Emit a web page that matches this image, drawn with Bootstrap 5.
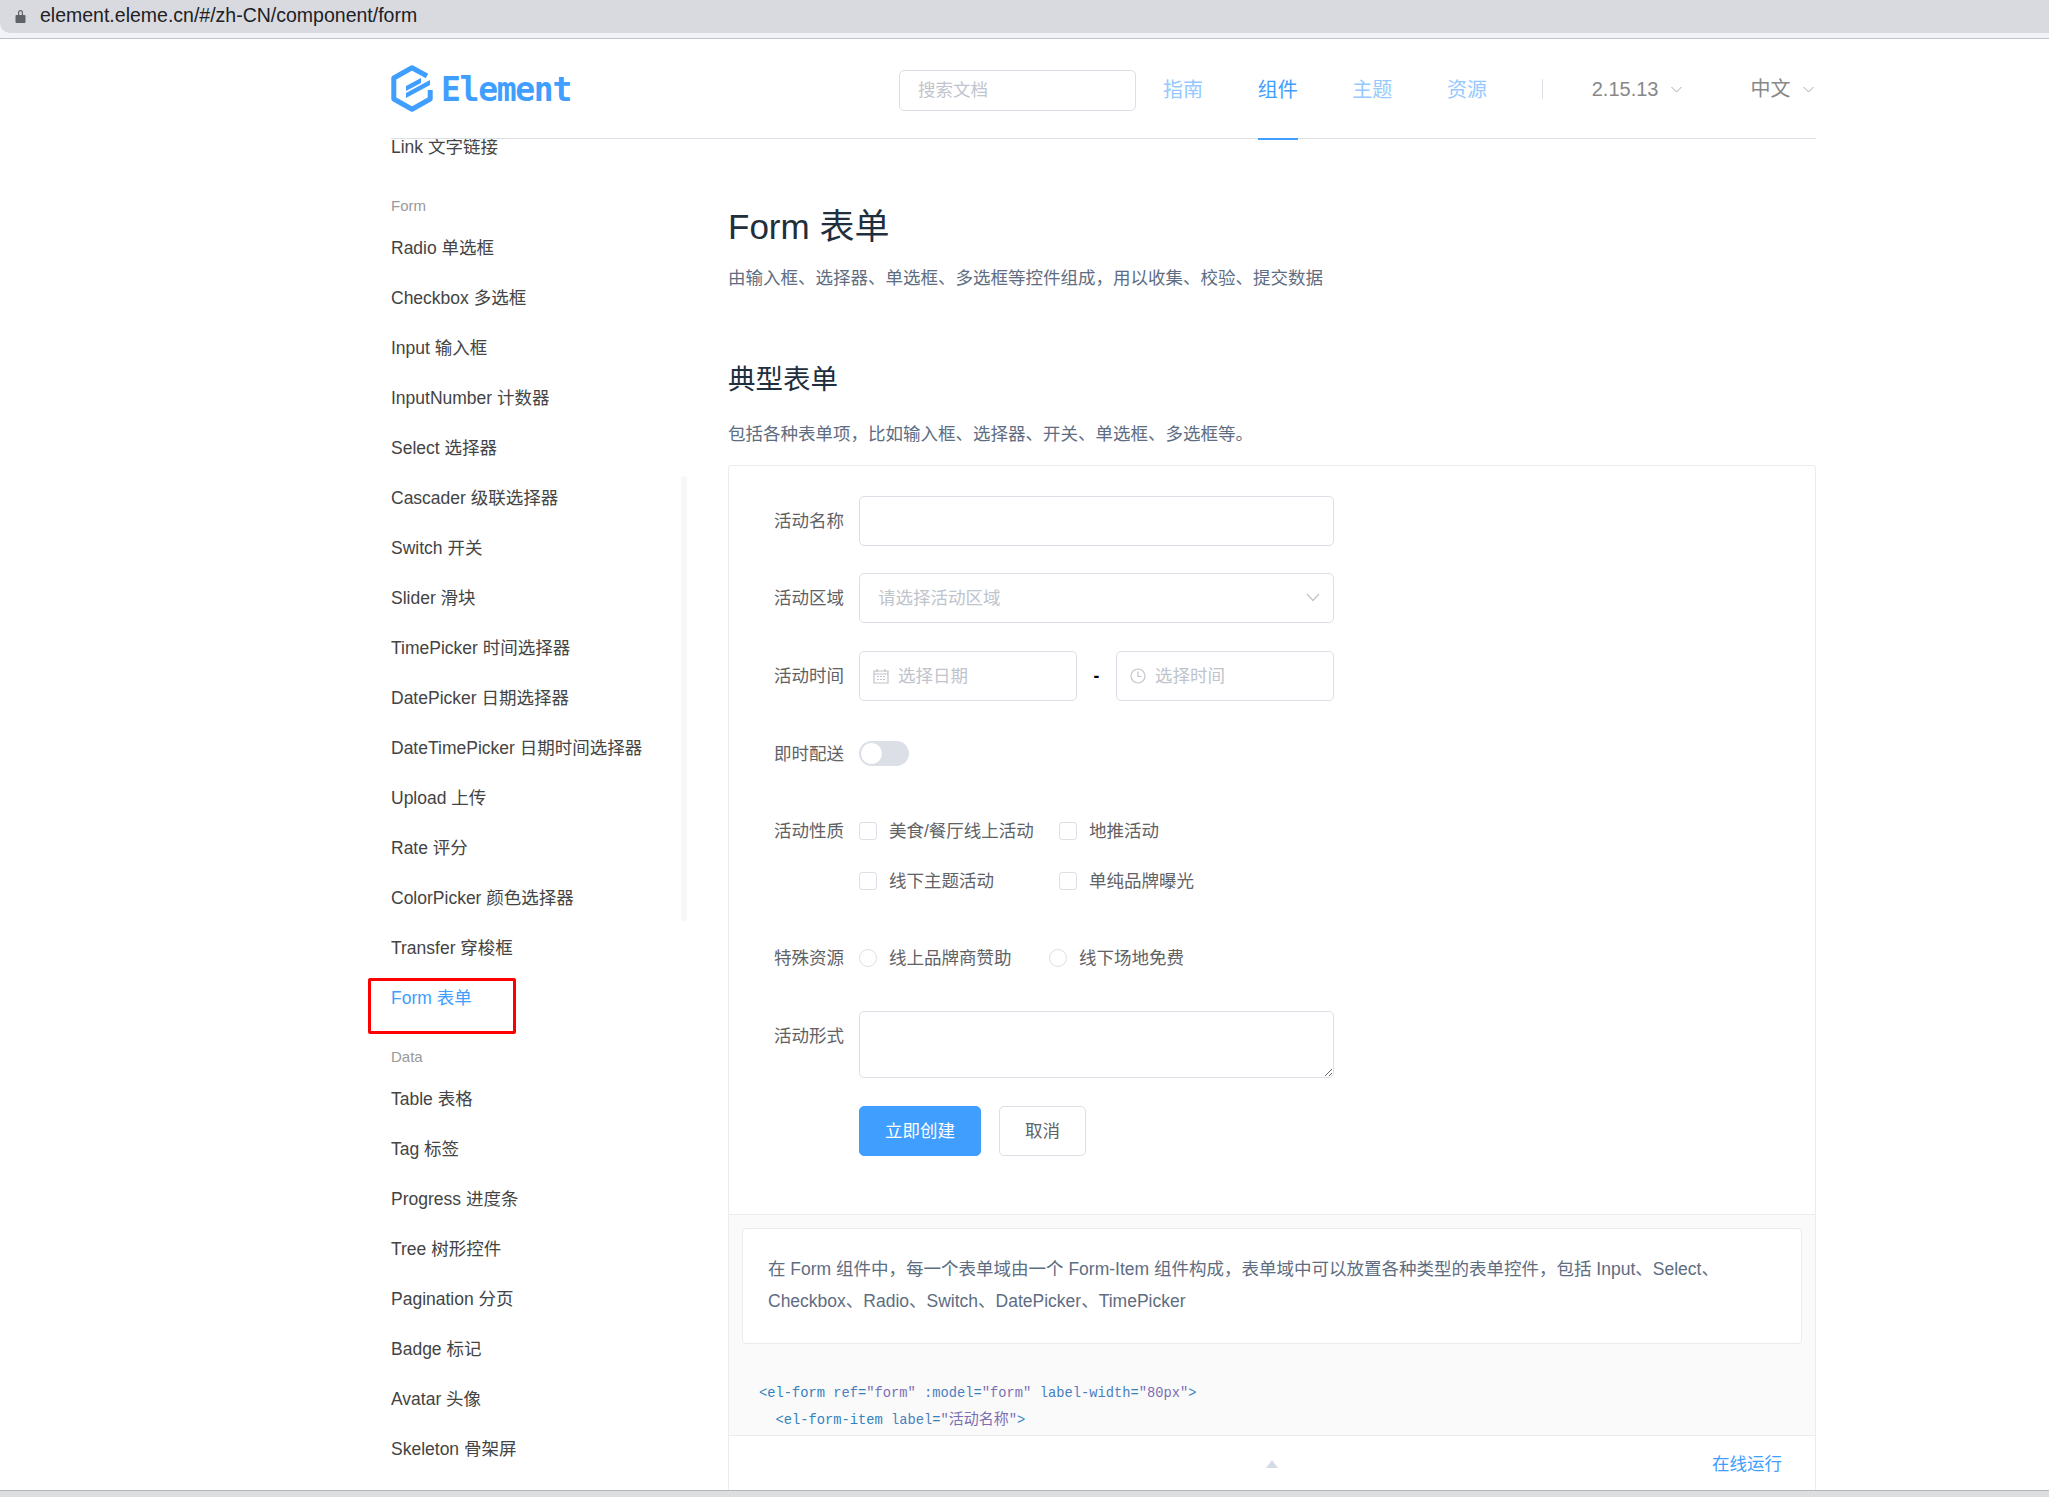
<!DOCTYPE html>
<html lang="zh-CN">
<head>
    <meta charset="UTF-8">
    <title>Element - 组件 - Form 表单</title>
    <link href="https://cdn.jsdelivr.net/npm/bootstrap@5.3.0/dist/css/bootstrap.min.css" rel="stylesheet">
    <style>
        html, body {
            height: 1497px;
            overflow: hidden;
        }

        body {
            background: #fff;
            font-family: "Liberation Sans", "Noto Sans CJK SC", sans-serif;
            font-size: 17.5px;
            color: #606266;
        }

        /* browser url strip */
        .url-strip {
            height: 39px;
            background: #f1f3f8;
            border-bottom: 1px solid #bfbfc9;
        }

        .url-pill {
            height: 33px;
            background: #d9dadf;
            border-bottom-left-radius: 10px;
            padding: 0 0 2px 15px;
            gap: 14px;
            font-size: 19.5px;
            color: #202124;
        }

        .page-wrap {
            margin-left: 391px;
            width: 1425px;
        }

        /* header */
        .top-head {
            height: 100px;
            border-bottom: 1px solid #dcdfe6;
            position: relative;
            z-index: 2;
            background: #fff;
        }

        .logo-text {
            font-family: "DejaVu Sans Mono", monospace;
            font-weight: 700;
            font-size: 33px;
            color: #409eff;
            letter-spacing: -1.3px;
            line-height: 1;
            padding-top: 2px;
        }

        .search-box {
            width: 237px;
            height: 41px;
            margin: 3px 27px 0 328px;
            border: 1px solid #dcdfe6;
            border-radius: 5px;
            padding: 0 18px;
            font-size: 17.5px;
            color: #606266;
        }

        .search-box::placeholder {
            color: #c0c4cc;
        }

        .head-link {
            font-size: 20px;
            color: #95c9ff;
            width: 40px;
            margin-right: 54.7px;
            height: 100px;
            line-height: 102px;
            position: relative;
            text-decoration: none;
        }

        .head-link.on {
            color: #409eff;
        }

        .head-link.on::after {
            content: "";
            position: absolute;
            left: 0;
            right: 0;
            bottom: -1px;
            height: 2px;
            background: #409eff;
        }

        .head-sep {
            width: 1px;
            height: 20px;
            background: #dcdfe6;
            margin-right: 49px;
            margin-left: 0;
        }

        .head-drop {
            font-size: 20px;
            color: #888;
            gap: 13px;
            padding-top: 1px;
        }

        .head-lang {
            margin-left: 68px;
        }

        /* sidebar */
        .body-row {
            height: 1351px;
            position: relative;
        }

        .side-col {
            width: 337px;
            flex: none;
            margin-top: -17px;
            position: relative;
        }

        .side-item {
            height: 50px;
            line-height: 50px;
            color: #444;
            font-size: 17.5px;
            position: relative;
        }

        .side-item.on {
            color: #409eff;
        }

        .side-group {
            height: 51px;
            padding-top: 26px;
            line-height: 15px;
            font-size: 15px;
            color: #999;
        }

        .red-mark {
            position: absolute;
            left: -23px;
            top: 5px;
            width: 148px;
            height: 56px;
            border: 3px solid #f00;
            border-radius: 2px;
        }

        .side-scroll {
            position: absolute;
            left: 290px;
            top: 354px;
            width: 6px;
            height: 445px;
            border-radius: 3px;
            background: #f7f7f8;
        }

        /* main */
        .main-col {
            flex: 1;
            min-width: 0;
        }

        .page-title {
            font-size: 35px;
            font-weight: 400;
            color: #1f2f3d;
            line-height: 44px;
            margin: 66px 0 0;
        }

        .page-lead {
            line-height: 30px;
            color: #5e6d82;
            margin: 14px 0 0;
            font-size: 17.5px;
        }

        .sect-title {
            font-size: 27.5px;
            font-weight: 400;
            color: #1f2f3d;
            line-height: 36px;
            margin: 69px 0 0;
        }

        .sect-lead {
            line-height: 30px;
            color: #5e6d82;
            margin: 21px 0 0;
        }

        .demo-box {
            margin-top: 16px;
            height: 1026px;
            border: 1px solid #ebebeb;
            border-bottom: 0;
            border-radius: 4px 4px 0 0;
            display: flex;
            flex-direction: column;
        }

        .demo-form {
            height: 748px;
            padding: 30px 0 0 30px;
            flex: none;
        }

        .f-row {
            display: flex;
            width: 575px;
        }

        .f-gap-a {
            margin-bottom: 27px;
        }

        .f-gap-b {
            margin-bottom: 28px;
        }

        .f-label {
            width: 100px;
            flex: none;
            text-align: right;
            padding-right: 15px;
            line-height: 50px;
        }

        .f-input {
            height: 50px;
            width: 475px;
            border: 1px solid #dcdfe6;
            border-radius: 5px;
            padding: 0 18px;
            font-size: 17.5px;
            color: #606266;
            box-shadow: none;
        }

        .f-input::placeholder {
            color: #c0c4cc;
            opacity: 1;
        }

        .f-select {
            color: #c0c4cc;
            line-height: 48px;
            position: relative;
        }

        .f-chevron {
            position: absolute;
            right: 13px;
            top: 19px;
        }

        .f-half {
            width: 218px;
            height: 50px;
            border: 1px solid #dcdfe6;
            border-radius: 5px;
            color: #c0c4cc;
            gap: 9px;
            padding-left: 13px;
        }

        .f-dash {
            width: 39px;
            text-align: center;
            color: #000;
            font-weight: 700;
            line-height: 50px;
        }

        .f-switch {
            width: 50px;
            height: 25px;
            border-radius: 13px;
            background: #dcdfe6;
            padding: 2px;
            margin-top: 12px;
        }

        .f-knob {
            width: 21px;
            height: 21px;
            border-radius: 50%;
            background: #fff;
        }

        .f-spacer {
            height: 50px;
        }

        .f-boxes {
            width: 475px;
        }

        .f-check {
            height: 50px;
            line-height: 50px;
            gap: 12px;
        }

        .f-w-a {
            width: 200px;
        }

        .f-w-b {
            width: 275px;
        }

        .f-w-c {
            width: 190px;
        }

        .f-tick {
            width: 18px;
            height: 18px;
            border: 1px solid #dcdfe6;
            border-radius: 3px;
            background: #fff;
            flex: none;
        }

        .f-dot {
            width: 18px;
            height: 18px;
            border: 1px solid #dcdfe6;
            border-radius: 50%;
            background: #fff;
            flex: none;
        }

        textarea.f-input {
            height: 67px;
            min-height: 0;
            padding: 6px 18px;
            display: block;
        }

        .btn-make, .btn-stop {
            height: 50px;
            border-radius: 5px;
            font-size: 17.5px;
            padding: 0;
        }

        .btn-make {
            width: 122px;
            background: #409eff;
            border-color: #409eff;
            color: #fff;
        }

        .btn-stop {
            width: 87px;
            background: #fff;
            border: 1px solid #dcdfe6;
            color: #606266;
            margin-left: 18px;
        }

        /* code + tip block */
        .meta-box {
            height: 222px;
            flex: none;
            background: #fafafa;
            border-top: 1px solid #ebebeb;
            border-bottom: 1px solid #ebebeb;
            padding: 13px 13px 0;
            overflow: hidden;
        }

        .tip-card {
            height: 116px;
            background: #fff;
            border: 1px solid #ebebeb;
            border-radius: 4px;
            padding: 24px 24px 24px 25px;
            color: #5e6d82;
            line-height: 32px;
        }

        .code-txt {
            font-family: "Liberation Mono", "Noto Sans CJK SC", monospace;
            font-size: 13.75px;
            line-height: 27px;
            margin: 36px 0 0 17px;
            color: #3182bd;
            white-space: pre;
        }

        .code-txt i {
            font-style: normal;
            color: #4a7fbf;
        }

        .code-txt b {
            font-weight: 400;
            color: #7a6fb5;
        }

        .code-txt u {
            text-decoration: none;
            font-size: 15px;
        }

        .foot-bar {
            height: 54px;
            position: relative;
            flex: none;
        }

        .foot-arrow {
            position: absolute;
            left: 537px;
            top: 24px;
            width: 0;
            height: 0;
            border-left: 6px solid transparent;
            border-right: 6px solid transparent;
            border-bottom: 8px solid #d3dce6;
        }

        .foot-run {
            position: absolute;
            right: 33px;
            top: 15px;
            color: #409eff;
            line-height: 26px;
        }

        .end-strip {
            height: 7px;
            background: #dcdee0;
            border-top: 1px solid #b5b5b5;
            position: absolute;
            left: 0;
            right: 0;
            top: 1490px;
        }
    </style>
</head>
<body>
    <div class="url-strip">
        <div class="url-pill d-flex align-items-center">
            <svg width="11" height="14" viewBox="0 0 11 14">
                <path fill="#5f6368" d="M1.5 6h8a1 1 0 0 1 1 1v6a1 1 0 0 1-1 1h-8a1 1 0 0 1-1-1V7a1 1 0 0 1 1-1zM3 6V3.5a2.5 2.5 0 0 1 5 0V6H6.8V3.5a1.3 1.3 0 0 0-2.6 0V6z"/>
            </svg>
            <span>element.eleme.cn/#/zh-CN/component/form</span>
        </div>
    </div>

    <div class="page-wrap">
        <header class="top-head d-flex align-items-center">
            <div class="d-flex align-items-center gap-2">
                <svg width="42" height="47" viewBox="0 0 42 47">
                    <path fill="none" stroke="#409eff" stroke-width="5" stroke-linejoin="round" d="M36 11 21 2.8 2.8 13v21L21 44.2 39.2 34v-9"/>
                    <path fill="#409eff" d="M15 21 30 13v5l-15 8zM15 28 39 15v5L15 33z"/>
                </svg>
                <span class="logo-text">Element</span>
            </div>
            <input class="search-box" placeholder="搜索文档">
            <a class="head-link" href="#">指南</a>
            <a class="head-link on" href="#">组件</a>
            <a class="head-link" href="#">主题</a>
            <a class="head-link" href="#">资源</a>
            <span class="head-sep"></span>
            <span class="head-drop d-flex align-items-center">2.15.13
                <svg width="11" height="7" viewBox="0 0 11 7"><path fill="none" stroke="#aaa" d="M.5 1l5 5 5-5"/></svg>
            </span>
            <span class="head-drop head-lang d-flex align-items-center">中文
                <svg width="11" height="7" viewBox="0 0 11 7"><path fill="none" stroke="#aaa" d="M.5 1l5 5 5-5"/></svg>
            </span>
        </header>

        <div class="body-row d-flex">
            <nav class="side-col">
                <div class="side-item">Link 文字链接</div>
                <div class="side-group">Form</div>
                <div class="side-item">Radio 单选框</div>
                <div class="side-item">Checkbox 多选框</div>
                <div class="side-item">Input 输入框</div>
                <div class="side-item">InputNumber 计数器</div>
                <div class="side-item">Select 选择器</div>
                <div class="side-item">Cascader 级联选择器</div>
                <div class="side-item">Switch 开关</div>
                <div class="side-item">Slider 滑块</div>
                <div class="side-item">TimePicker 时间选择器</div>
                <div class="side-item">DatePicker 日期选择器</div>
                <div class="side-item">DateTimePicker 日期时间选择器</div>
                <div class="side-item">Upload 上传</div>
                <div class="side-item">Rate 评分</div>
                <div class="side-item">ColorPicker 颜色选择器</div>
                <div class="side-item">Transfer 穿梭框</div>
                <div class="side-item on">Form 表单<span class="red-mark"></span></div>
                <div class="side-group">Data</div>
                <div class="side-item">Table 表格</div>
                <div class="side-item">Tag 标签</div>
                <div class="side-item">Progress 进度条</div>
                <div class="side-item">Tree 树形控件</div>
                <div class="side-item">Pagination 分页</div>
                <div class="side-item">Badge 标记</div>
                <div class="side-item">Avatar 头像</div>
                <div class="side-item">Skeleton 骨架屏</div>
                <span class="side-scroll"></span>
            </nav>

            <main class="main-col">
                <h1 class="page-title">Form 表单</h1>
                <p class="page-lead">由输入框、选择器、单选框、多选框等控件组成，用以收集、校验、提交数据</p>
                <h2 class="sect-title">典型表单</h2>
                <p class="sect-lead">包括各种表单项，比如输入框、选择器、开关、单选框、多选框等。</p>

                <div class="demo-box">
                    <form class="demo-form">
                        <div class="f-row f-gap-a">
                            <label class="f-label">活动名称</label>
                            <input class="f-input form-control">
                        </div>
                        <div class="f-row f-gap-b">
                            <label class="f-label">活动区域</label>
                            <div class="f-input f-select">请选择活动区域
                                <svg class="f-chevron" width="14" height="9" viewBox="0 0 14 9"><path fill="none" stroke="#c0c4cc" stroke-width="1.2" d="M1 1l6 6.5L13 1"/></svg>
                            </div>
                        </div>
                        <div class="f-row f-gap-b">
                            <label class="f-label">活动时间</label>
                            <div class="f-half d-flex align-items-center">
                                <svg width="16" height="16" viewBox="0 0 16 16"><path fill="none" stroke="#c0c4cc" stroke-width="1.2" d="M1 3h14v12H1zM1 6h14M4 1v3M12 1v3"/><path fill="#c0c4cc" d="M4 8h2v1H4zM7 8h2v1H7zM10 8h2v1h-2zM4 11h2v1H4zM7 11h2v1H7zM10 11h2v1h-2z"/></svg>
                                <span>选择日期</span>
                            </div>
                            <span class="f-dash">-</span>
                            <div class="f-half d-flex align-items-center">
                                <svg width="16" height="16" viewBox="0 0 16 16"><circle cx="8" cy="8" r="7" fill="none" stroke="#c0c4cc" stroke-width="1.2"/><path fill="none" stroke="#c0c4cc" stroke-width="1.2" d="M8 3.5V8.5h3.5"/></svg>
                                <span>选择时间</span>
                            </div>
                        </div>
                        <div class="f-row f-gap-a">
                            <label class="f-label">即时配送</label>
                            <div class="f-switch"><div class="f-knob"></div></div>
                            <div class="f-spacer"></div>
                        </div>
                        <div class="f-row f-gap-a">
                            <label class="f-label">活动性质</label>
                            <div class="f-boxes d-flex flex-wrap">
                                <div class="f-check f-w-a d-flex align-items-center"><span class="f-tick"></span>美食/餐厅线上活动</div>
                                <div class="f-check f-w-b d-flex align-items-center"><span class="f-tick"></span>地推活动</div>
                                <div class="f-check f-w-a d-flex align-items-center"><span class="f-tick"></span>线下主题活动</div>
                                <div class="f-check f-w-b d-flex align-items-center"><span class="f-tick"></span>单纯品牌曝光</div>
                            </div>
                        </div>
                        <div class="f-row f-gap-b">
                            <label class="f-label">特殊资源</label>
                            <div class="d-flex">
                                <div class="f-check f-w-c d-flex align-items-center"><span class="f-dot"></span>线上品牌商赞助</div>
                                <div class="f-check d-flex align-items-center"><span class="f-dot"></span>线下场地免费</div>
                            </div>
                        </div>
                        <div class="f-row f-gap-b">
                            <label class="f-label">活动形式</label>
                            <textarea class="f-input form-control"></textarea>
                        </div>
                        <div class="f-row">
                            <span class="f-label"></span>
                            <button type="button" class="btn btn-primary btn-make">立即创建</button>
                            <button type="button" class="btn btn-stop">取消</button>
                        </div>
                    </form>

                    <div class="meta-box">
                        <div class="tip-card">在 Form 组件中，每一个表单域由一个 Form-Item 组件构成，表单域中可以放置各种类型的表单控件，包括 Input、Select、Checkbox、Radio、Switch、DatePicker、TimePicker</div>
                        <div class="code-txt">&lt;el-form <i>ref</i>=<b>"form"</b> <i>:model</i>=<b>"form"</b> <i>label-width</i>=<b>"80px"</b>&gt;
  &lt;el-form-item <i>label</i>=<b>"<u>活动名称</u>"</b>&gt;</div>
                    </div>
                    <div class="foot-bar">
                        <span class="foot-arrow"></span>
                        <span class="foot-run">在线运行</span>
                    </div>
                </div>
            </main>
        </div>
    </div>
    <div class="end-strip"></div>

    <script src="https://cdn.jsdelivr.net/npm/bootstrap@5.3.0/dist/js/bootstrap.bundle.min.js"></script>
</body>
</html>
